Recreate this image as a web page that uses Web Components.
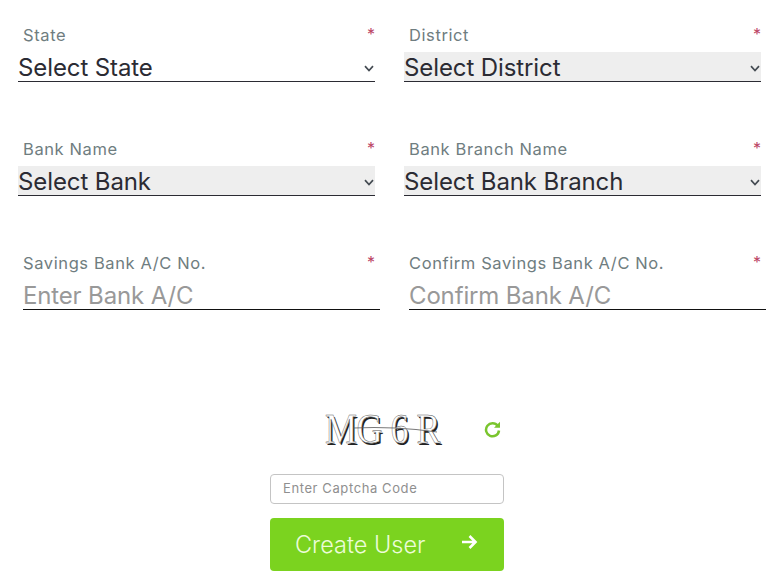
<!DOCTYPE html>
<html>
<head>
<meta charset="utf-8">
<style>
  html, body { margin: 0; background: #fff; font-family: Inter, "Noto Sans", sans-serif; }
</style>
</head>
<body>
<app-form></app-form>
<script>
class FieldLabel extends HTMLElement {
  connectedCallback() {
    this.attachShadow({ mode: 'open' });
    this.shadowRoot.innerHTML = `
      <style>
        :host { display: flex; justify-content: space-between; height: 28px; padding-right: 5px; color: #6f7d80; font-size: 16.5px; line-height: 22px; letter-spacing: 0.6px; }
        .star { color: #bb4464; font-size: 16px; line-height: 20px; letter-spacing: 0; }
      </style>
      <span><slot></slot></span><span class="star">*</span>
    `;
  }
}
customElements.define('field-label', FieldLabel);

class SelectField extends HTMLElement {
  connectedCallback() {
    const shaded = this.hasAttribute('shaded');
    this.attachShadow({ mode: 'open' });
    this.shadowRoot.innerHTML = `
      <style>
        :host { display: block; }
        .box {
          display: flex; align-items: center; justify-content: space-between;
          margin-left: -5px; margin-right: 5px; height: 30px; box-sizing: border-box;
          padding: 1px 1px 0 0;
          background: ${shaded ? '#eeeeee' : 'transparent'};
          border-bottom: 1px solid #2b2b33;
          color: #2b2b33; font-size: 24px; line-height: 29px; letter-spacing: -0.1px;
        }
        svg { width: 10px; height: 7px; margin-top: 2px; }
      </style>
      <field-label>${this.getAttribute('label')}</field-label>
      <div class="box">
        <span>${this.getAttribute('text')}</span>
        <svg viewBox="0 0 10 7"><path d="M1 1.200 5 5.500l4-4.300" fill="none" stroke="#444b52" stroke-width="1.700"/></svg>
      </div>
    `;
  }
}
customElements.define('select-field', SelectField);

class InputField extends HTMLElement {
  connectedCallback() {
    this.attachShadow({ mode: 'open' });
    this.shadowRoot.innerHTML = `
      <style>
        :host { display: block; }
        .box {
          height: 30px; box-sizing: border-box; border-bottom: 1px solid #111;
          color: #999; font-size: 24px; line-height: 31px; letter-spacing: -0.15px;
        }
      </style>
      <field-label>${this.getAttribute('label')}</field-label>
      <div class="box">${this.getAttribute('placeholder')}</div>
    `;
  }
}
customElements.define('input-field', InputField);

class CaptchaBox extends HTMLElement {
  connectedCallback() {
    this.attachShadow({ mode: 'open' });
    this.shadowRoot.innerHTML = `
      <style>
        :host { display: flex; align-items: center; height: 44px; width: 234px; }
        .code { position: relative; width: 116px; height: 44px; margin-left: 55px; }
        .word {
          display: block; font-family: "Liberation Serif", serif; font-size: 36px; line-height: 44px;
          white-space: pre; color: #fff; -webkit-text-stroke: 0.4px #555;
          text-shadow: 1.500px 1.500px 0 #222; transform: scaleY(1.15); transform-origin: 0 50%;
          letter-spacing: -0.5px;
        }
        .line { position: absolute; left: 0; top: 0; width: 116px; height: 44px; }
        .ref { width: 17px; height: 17px; margin-left: 43px; }
      </style>
      <div class="code">
        <span class="word">MG 6 R</span>
        <svg class="line" viewBox="0 0 116 44"><path d="M28 21 Q70 19 112 25" fill="none" stroke="#555" stroke-width="0.800"/></svg>
      </div>
      <svg class="ref" viewBox="0 0 17 17">
        <path d="M13.800 5A6.500 6.500 0 1 0 15 9.500" fill="none" stroke="#7ac52e" stroke-width="2.500"/>
        <path d="M16 0.800v6h-6z" fill="#7ac52e"/>
      </svg>
    `;
  }
}
customElements.define('captcha-box', CaptchaBox);

class CaptchaInput extends HTMLElement {
  connectedCallback() {
    this.attachShadow({ mode: 'open' });
    this.shadowRoot.innerHTML = `
      <style>
        :host {
          display: block; width: 234px; height: 30px; box-sizing: border-box; padding-left: 12px;
          border: 1px solid #c4c4c4; border-radius: 4px;
          color: #8f8f8f; font-size: 13px; line-height: 27px; letter-spacing: 0.6px;
        }
      </style>
      <slot></slot>
    `;
  }
}
customElements.define('captcha-input', CaptchaInput);

class SubmitButton extends HTMLElement {
  connectedCallback() {
    this.attachShadow({ mode: 'open' });
    this.shadowRoot.innerHTML = `
      <style>
        :host {
          display: flex; align-items: center; justify-content: space-between;
          width: 234px; height: 53px; box-sizing: border-box; padding: 0 26px 0 25px;
          background: #7bd31f; border-radius: 4px;
          color: #ecfcd8; font-size: 23.5px; font-weight: 300;
        }
        svg { width: 18px; height: 16px; margin-bottom: 5px; }
      </style>
      <span><slot></slot></span>
      <svg viewBox="0 0 18 16"><path d="M2 8h13M9.500 2l6 6-6 6" fill="none" stroke="#fff" stroke-width="2.600"/></svg>
    `;
  }
}
customElements.define('submit-button', SubmitButton);

class AppForm extends HTMLElement {
  connectedCallback() {
    this.attachShadow({ mode: 'open' });
    this.shadowRoot.innerHTML = `
      <style>
        :host { display: block; box-sizing: border-box; width: 778px; height: 583px; overflow: hidden; padding: 24px 12px 0 23px; }
        .grid { display: grid; grid-template-columns: 357px 357px; column-gap: 29px; row-gap: 56px; }
        .lower { display: flex; flex-direction: column; align-items: flex-start; padding: 97px 0 0 247px; }
        captcha-input { margin-top: 23px; }
        submit-button { margin-top: 14px; }
      </style>
      <div class="grid">
        <select-field label="State" text="Select State"></select-field>
        <select-field label="District" text="Select District" shaded></select-field>
        <select-field label="Bank Name" text="Select Bank" shaded></select-field>
        <select-field label="Bank Branch Name" text="Select Bank Branch" shaded></select-field>
        <input-field label="Savings Bank A/C No." placeholder="Enter Bank A/C"></input-field>
        <input-field label="Confirm Savings Bank A/C No." placeholder="Confirm Bank A/C"></input-field>
      </div>
      <div class="lower">
        <captcha-box></captcha-box>
        <captcha-input>Enter Captcha Code</captcha-input>
        <submit-button>Create User</submit-button>
      </div>
    `;
  }
}
customElements.define('app-form', AppForm);
</script>
</body>
</html>
